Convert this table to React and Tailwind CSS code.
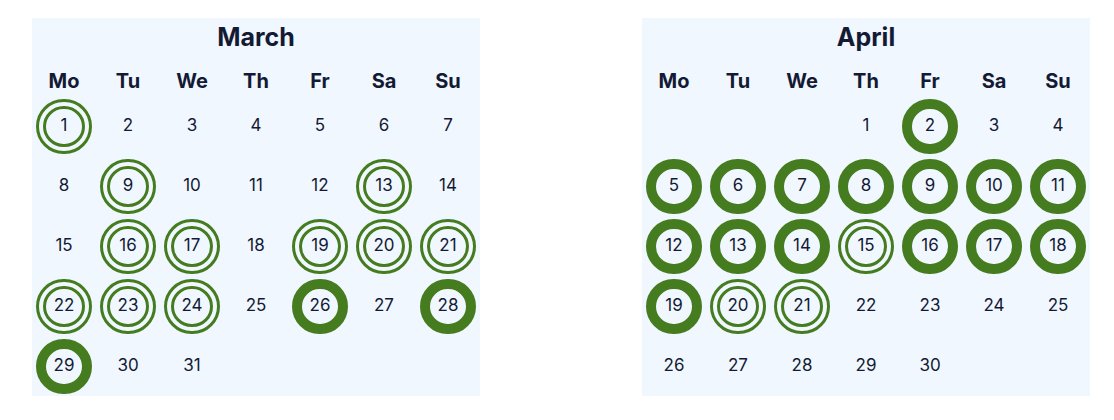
import React from 'react';

const weekdays = ['Mo', 'Tu', 'We', 'Th', 'Fr', 'Sa', 'Su'];

const months = [
  {
    name: 'March',
    offset: 0,
    days: 31,
    solid: [26, 28, 29],
    double: [1, 9, 13, 16, 17, 19, 20, 21, 22, 23, 24],
  },
  {
    name: 'April',
    offset: 3,
    days: 30,
    solid: [2, 5, 6, 7, 8, 9, 10, 11, 12, 13, 14, 16, 17, 18, 19],
    double: [15, 20, 21],
  },
];

function Day({ day, kind }) {
  let ring = '';
  if (kind === 'solid') ring = 'border-[10px] border-solid border-[#467c20]';
  if (kind === 'double') ring = 'border-[10px] border-double border-[#467c20]';
  return (
    <div className="h-[60px] flex items-center justify-center pt-[2px]">
      <div className={`w-[56px] h-[55px] rounded-full flex items-center justify-center text-[17px] text-[#141a33] ${ring}`}>
        {day}
      </div>
    </div>
  );
}

function Month({ month }) {
  const cells = [];
  for (let i = 0; i < month.offset; i++) cells.push(<div key={'e' + i} className="h-[60px]" />);
  for (let d = 1; d <= month.days; d++) {
    const kind = month.solid.includes(d) ? 'solid' : month.double.includes(d) ? 'double' : null;
    cells.push(<Day key={d} day={d} kind={kind} />);
  }
  return (
    <div className="w-[448px] h-[378px] bg-[#f0f7ff] flex flex-col">
      <div className="h-[38px] pt-[2px] flex items-center justify-center text-[25px] font-bold text-[#141a33]">
        {month.name}
      </div>
      <div className="h-[39px] grid grid-cols-7 items-end">
        {weekdays.map((w) => (
          <div key={w} className="text-center text-[20px] leading-[28px] font-bold text-[#141a33]">
            {w}
          </div>
        ))}
      </div>
      <div className="grid grid-cols-7">{cells}</div>
    </div>
  );
}

export default function App() {
  return (
    <div className="w-[1114px] h-[420px] bg-white pt-[18px] pl-[32px] flex gap-[162px] font-['Inter',sans-serif]">
      {months.map((m) => (
        <Month key={m.name} month={m} />
      ))}
    </div>
  );
}
